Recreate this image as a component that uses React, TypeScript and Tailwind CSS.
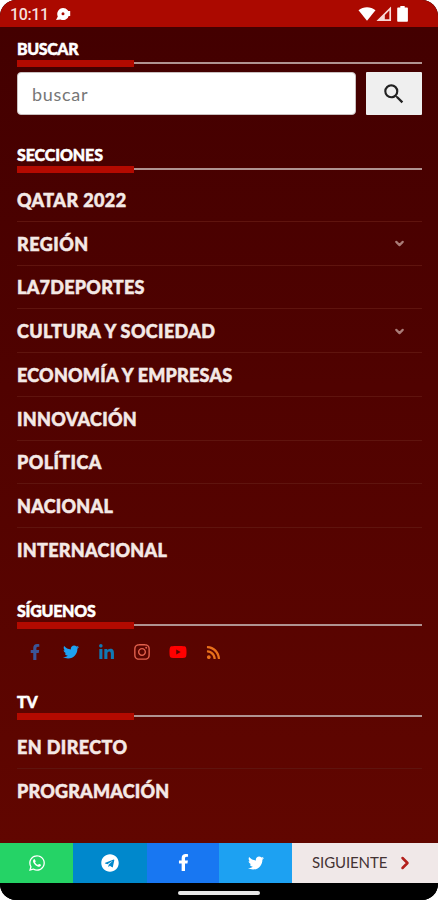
import { useState } from "react";
import type { ReactNode } from "react";
import {
  FaFacebookF,
  FaInstagram,
  FaLinkedinIn,
  FaRss,
  FaTelegram,
  FaTwitter,
  FaWhatsapp,
  FaYoutube,
} from "react-icons/fa";
import { MdSearch } from "react-icons/md";
import { ChevronDown, ChevronRight } from "lucide-react";

type Item = { label: string; tracking: string; expandable?: boolean };

const secciones: Item[] = [
  { label: "QATAR 2022", tracking: "tracking-[0.4px]" },
  { label: "REGIÓN", tracking: "tracking-[0.5px]", expandable: true },
  { label: "LA7DEPORTES", tracking: "tracking-[0.25px]" },
  { label: "CULTURA Y SOCIEDAD", tracking: "tracking-[0.36px]", expandable: true },
  { label: "ECONOMÍA Y EMPRESAS", tracking: "tracking-[0.22px]" },
  { label: "INNOVACIÓN", tracking: "tracking-[0.3px]" },
  { label: "POLÍTICA", tracking: "tracking-[0.4px]" },
  { label: "NACIONAL", tracking: "tracking-[0.25px]" },
  { label: "INTERNACIONAL", tracking: "tracking-[0.3px]" },
];

const tv: Item[] = [
  { label: "EN DIRECTO", tracking: "tracking-[0.4px]" },
  { label: "PROGRAMACIÓN", tracking: "tracking-[0.2px]" },
];

const redes = [
  { name: "Facebook", icon: <FaFacebookF className="size-[16px] text-[#3b5598]" /> },
  { name: "Twitter", icon: <FaTwitter className="size-[16px] text-[#1da1f2]" /> },
  { name: "LinkedIn", icon: <FaLinkedinIn className="size-[17px] text-[#1178b3]" /> },
  { name: "Instagram", icon: <FaInstagram className="size-[18px] text-[#e1604c]" /> },
  { name: "YouTube", icon: <FaYoutube className="size-[18px] text-[#ff0000]" /> },
  { name: "RSS", icon: <FaRss className="size-[15px] text-[#e8701a]" /> },
];

function Heading({ children, tracking }: { children: ReactNode; tracking: string }) {
  return (
    <div>
      <h2
        className={`h-[22px] text-[16px] leading-[22px] font-black text-white whitespace-nowrap [-webkit-text-stroke:0.5px_#fff] ${tracking}`}
      >
        {children}
      </h2>
      {/* Línea roja gruesa + línea gris fina */}
      <div className="flex h-[7px] items-start">
        <div className="h-[7px] w-[117px] bg-[#b30a00]" />
        <div className="mt-[1.5px] h-[2px] flex-1 bg-[#b09391]" />
      </div>
    </div>
  );
}

function Menu({ items }: { items: Item[] }) {
  return (
    <ul>
      {items.map((item) => (
        <li
          key={item.label}
          className="flex h-[43.75px] items-center justify-between border-b border-[#5f140e] pr-[16px] last:border-b-0"
        >
          <a
            className={`pt-[1px] text-[18px] leading-6 font-black text-[#f4e9e6] whitespace-nowrap [-webkit-text-stroke:0.5px_#f4e9e6] ${item.tracking}`}
          >
            {item.label}
          </a>
          {item.expandable && <ChevronDown className="mt-[1px] size-[13px] text-[#a97c77]" strokeWidth={4} />}
        </li>
      ))}
    </ul>
  );
}

// Barra de estado del teléfono
function StatusBar() {
  return (
    <div className="flex h-[27px] items-center bg-[#ab0900] pr-[30px] pl-[10px] text-white">
      <span className="w-[39px] pt-[2px] font-[Roboto,sans-serif] text-[16px] leading-5 font-medium tracking-[-0.4px] text-[#f6dedb]">
        10:11
      </span>
      <svg viewBox="0 0 16 14" className="ml-[6px] h-[14px] w-[16px]">
        <path
          fill="currentColor"
          fillRule="evenodd"
          d="M8 1a6 6 0 1 1-2.5 11.4L1 13l1.8-3.4A6 6 0 0 1 8 1Zm0 4.3a1.5 1.5 0 1 0 0 3A1.5 1.5 0 0 0 8 5.3Z"
        />
        <path fill="currentColor" d="M13 4h2.2v5H13z" />
      </svg>
      <div className="ml-auto flex items-center">
        <svg viewBox="0 0 18 16" className="h-[16px] w-[18px]">
          <path fill="currentColor" d="M.5 4.3C5.3.2 12.7.2 17.5 4.3L9 14.8Z" />
        </svg>
        <svg viewBox="0 0 16 16" className="h-[16px] w-[16px]">
          <path fill="none" stroke="#f8d9d6" strokeWidth="1.7" d="M2.5 14.2 14.2 2.5V14.2Z" />
          <path fill="#f8d9d6" d="M3 14.2 8.8 8.4V14.2Z" />
        </svg>
        <svg viewBox="0 0 11 16" className="ml-[5px] h-[16px] w-[11px]">
          <path fill="currentColor" d="M3.3 0h4.4v1.6h2.4a.8.8 0 0 1 .8.8V15a.8.8 0 0 1-.8.8H1A.8.8 0 0 1 .2 15V2.4a.8.8 0 0 1 .8-.8h2.3Z" />
        </svg>
      </div>
    </div>
  );
}

export default function App() {
  const [query, setQuery] = useState("");

  return (
    <div className="h-[900px] w-[438px] bg-white font-[Lato,sans-serif]">
      <div className="flex h-full flex-col overflow-hidden rounded-[16px] bg-black">
        <StatusBar />

        <main className="flex-1 bg-linear-to-b from-[#430000] to-[#610600] pr-4 pl-[17px]">
          <section className="pt-[11px]">
            <Heading tracking="tracking-[-0.4px]">BUSCAR</Heading>
            <form className="mt-[5px] flex h-[43px] gap-[10px]" onSubmit={(e) => e.preventDefault()}>
              <input
                value={query}
                onChange={(e) => setQuery(e.target.value)}
                placeholder="buscar"
                className="w-[339px] rounded-[4px] border border-[#c9c0c0] bg-white px-[14px] pt-[1px] text-[18px] tracking-[0.7px] text-[#444] outline-none placeholder:text-[#777]"
              />
              <button aria-label="Buscar" className="grid flex-1 place-items-center rounded-[1px] bg-[#efefef]">
                <MdSearch className="size-[26px] text-[#222]" />
              </button>
            </form>
          </section>

          <section className="pt-[29px]">
            <Heading tracking="tracking-[-0.1px]">SECCIONES</Heading>
            <div className="pt-[5px]">
              <Menu items={secciones} />
            </div>
          </section>

          <section className="pt-[28.5px]">
            <Heading tracking="tracking-[-0.25px]">SÍGUENOS</Heading>
            <div className="flex h-[46px] items-center gap-[17.7px] pl-[9px]">
              {redes.map((r) => (
                <a key={r.name} aria-label={r.name} className="grid size-[18px] place-items-center">
                  {r.icon}
                </a>
              ))}
            </div>
          </section>

          <section className="pt-[16px]">
            <Heading tracking="tracking-[-0.1px]">TV</Heading>
            <div className="pt-[4.5px]">
              <Menu items={tv} />
            </div>
          </section>
        </main>

        {/* Compartir + siguiente noticia */}
        <footer className="flex h-[40px] shrink-0 text-white">
          <a className="grid w-[73px] place-items-center bg-[#25d366]">
            <FaWhatsapp className="size-[18px]" />
          </a>
          <a className="grid w-[74px] place-items-center bg-[#0088cc]">
            <FaTelegram className="size-[18px]" />
          </a>
          <a className="grid w-[72px] place-items-center bg-[#1877f2]">
            <FaFacebookF className="size-[17px]" />
          </a>
          <a className="grid w-[73px] place-items-center bg-[#1da1f2]">
            <FaTwitter className="size-[16px]" />
          </a>
          <a className="flex flex-1 items-center bg-[#f0e8e8] pl-[20px] text-[15px] text-[#433]">
            <span className="w-[76px] tracking-[-0.1px] whitespace-nowrap">SIGUIENTE</span>
            <ChevronRight className="ml-[7px] size-[20px] text-[#b3201c]" strokeWidth={3} />
          </a>
        </footer>

        <div className="flex h-[17.5px] shrink-0 justify-center bg-black pt-[8px]">
          <div className="h-[4px] w-[82px] rounded-full bg-[#e8e8e8]" />
        </div>
      </div>
    </div>
  );
}
